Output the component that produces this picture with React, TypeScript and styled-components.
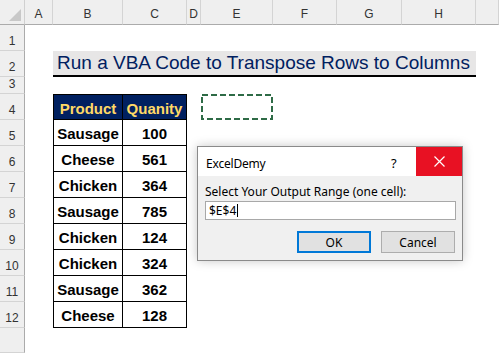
import styled, { createGlobalStyle } from "styled-components";

const GlobalStyle = createGlobalStyle`
  html, body {
    margin: 0;
    padding: 0;
    background: #ffffff;
    overflow: hidden;
  }
  * {
    box-sizing: border-box;
  }
`;

const COLS = "25px 28px 70px 64px 14px 72px 64px 65px 74px 1fr";

const Page = styled.div`
  position: relative;
  width: 499px;
  height: 353px;
  overflow: hidden;
  font-family: "Liberation Sans", Arial, sans-serif;
`;

const Sheet = styled.div`
  display: flex;
  flex-direction: column;
  height: 100%;
`;

const Row = styled.div<{ h: number }>`
  display: grid;
  grid-template-columns: ${COLS};
  height: ${({ h }) => h}px;
  flex: ${({ h }) => (h === 0 ? "1" : "none")};
`;

const Corner = styled.div`
  position: relative;
  background: #efefef;
  border-right: 1px solid #d0d0d0;
  border-bottom: 1px solid #ababab;

  &::after {
    content: "";
    position: absolute;
    right: 3px;
    bottom: 3px;
    border-style: solid;
    border-width: 0 0 12px 12px;
    border-color: transparent transparent #c8c8c8 transparent;
  }
`;

const ColHead = styled.div`
  display: flex;
  align-items: flex-end;
  justify-content: center;
  padding-bottom: 3px;
  background: #efefef;
  border-right: 1px solid #d4d4d4;
  border-bottom: 1px solid #ababab;
  font-size: 12px;
  line-height: 14px;
  color: #333333;
`;

const RowHead = styled.div`
  display: flex;
  align-items: flex-end;
  justify-content: center;
  padding-bottom: 2px;
  background: #efefef;
  border-right: 1px solid #ababab;
  border-bottom: 1px solid #d4d4d4;
  font-size: 12px;
  line-height: 14px;
  color: #333333;
`;

const Blank = styled.div<{ span?: number }>`
  grid-column: span ${({ span }) => span ?? 1};
  background: #ffffff;
`;

const Title = styled.div`
  grid-column: span 7;
  display: flex;
  align-items: center;
  padding-left: 4px;
  background: #e7e6e6;
  border-bottom: 2px solid #000000;
  font-size: 19px;
  color: #002060;
  white-space: nowrap;
`;

const TableCell = styled.div<{ head?: boolean; first?: boolean; top?: boolean }>`
  display: flex;
  align-items: center;
  justify-content: center;
  padding-top: 2px;
  font-size: 15px;
  font-weight: bold;
  white-space: nowrap;
  color: ${({ head }) => (head ? "#ffd966" : "#000000")};
  background: ${({ head }) => (head ? "#002060" : "#ffffff")};
  border-right: 1px solid #000000;
  border-bottom: 1px solid #000000;
  ${({ first }) => first && "border-left: 1px solid #000000;"}
  ${({ top }) => top && "border-top: 1px solid #000000;"}
`;

const MarqueeCell = styled.div`
  display: flex;
`;

const Dialog = styled.div`
  position: absolute;
  left: 197px;
  top: 146px;
  width: 266px;
  height: 115px;
  display: flex;
  flex-direction: column;
  background: #f0f0f0;
  border: 1px solid #8a8a8a;
  box-shadow: 0 0 10px rgba(0, 0, 0, 0.22);
  font-family: "Noto Sans", "Open Sans", sans-serif;
  font-size: 12px;
  color: #000000;
`;

const TitleBar = styled.div`
  display: flex;
  align-items: center;
  height: 29px;
  background: #ffffff;
`;

const DialogTitle = styled.div`
  flex: 1;
  padding: 3px 0 0 8px;
  letter-spacing: -0.2px;
`;

const HelpMark = styled.div`
  width: 25px;
  padding-top: 3px;
  font-size: 13px;
`;

const CloseButton = styled.div`
  width: 46px;
  height: 100%;
  display: flex;
  align-items: center;
  justify-content: center;
  background: #e81123;
`;

const DialogBody = styled.div`
  display: flex;
  flex-direction: column;
  padding: 8px 6px 0 7px;
`;

const Label = styled.div`
  line-height: 16px;
  margin-bottom: 1px;
`;

const InputBox = styled.div`
  display: flex;
  align-items: center;
  height: 19px;
  padding-left: 3px;
  background: #ffffff;
  border: 1px solid #a8a8a8;
  line-height: 16px;
`;

const Caret = styled.span`
  display: inline-block;
  width: 1px;
  height: 13px;
  margin-left: 1px;
  background: #000000;
`;

const ButtonRow = styled.div`
  display: flex;
  justify-content: flex-end;
  gap: 10px;
  margin-top: 11px;
  padding-right: 1px;
`;

const DialogButton = styled.div<{ primary?: boolean }>`
  width: 74px;
  height: 22px;
  display: flex;
  align-items: center;
  justify-content: center;
  background: #e1e1e1;
  border: ${({ primary }) => (primary ? "2px solid #0078d7" : "1px solid #adadad")};
`;

const letters = ["A", "B", "C", "D", "E", "F", "G", "H", ""];

const data: [string, number][] = [
  ["Sausage", 100],
  ["Cheese", 561],
  ["Chicken", 364],
  ["Sausage", 785],
  ["Chicken", 124],
  ["Chicken", 324],
  ["Sausage", 362],
  ["Cheese", 128],
];

export default function App() {
  return (
    <>
      <GlobalStyle />
      <Page>
        <Sheet>
          <Row h={25}>
            <Corner />
            {letters.map((l, i) => (
              <ColHead key={i}>{l}</ColHead>
            ))}
          </Row>
          <Row h={26}>
            <RowHead>1</RowHead>
            <Blank span={9} />
          </Row>
          <Row h={26}>
            <RowHead>2</RowHead>
            <Blank />
            <Title>Run a VBA Code to Transpose Rows to Columns</Title>
            <Blank />
          </Row>
          <Row h={17}>
            <RowHead>3</RowHead>
            <Blank span={9} />
          </Row>
          <Row h={26}>
            <RowHead>4</RowHead>
            <Blank />
            <TableCell head first top>
              Product
            </TableCell>
            <TableCell head top>
              Quanity
            </TableCell>
            <Blank />
            <MarqueeCell>
              <svg width="72" height="26" viewBox="0 0 72 26">
                <rect
                  x="1"
                  y="1"
                  width="70"
                  height="24"
                  fill="none"
                  stroke="#2e6b46"
                  strokeWidth="2"
                  strokeDasharray="6 3"
                />
              </svg>
            </MarqueeCell>
            <Blank span={4} />
          </Row>
          {data.map(([name, qty], i) => (
            <Row h={26} key={i}>
              <RowHead>{i + 5}</RowHead>
              <Blank />
              <TableCell first>{name}</TableCell>
              <TableCell>{qty}</TableCell>
              <Blank span={6} />
            </Row>
          ))}
          <Row h={0}>
            <RowHead />
            <Blank span={9} />
          </Row>
        </Sheet>

        <Dialog>
          <TitleBar>
            <DialogTitle>ExcelDemy</DialogTitle>
            <HelpMark>?</HelpMark>
            <CloseButton>
              <svg width="11" height="11" viewBox="0 0 11 11">
                <path d="M0.5 0.5 L10.5 10.5 M10.5 0.5 L0.5 10.5" stroke="#ffffff" strokeWidth="1.2" />
              </svg>
            </CloseButton>
          </TitleBar>
          <DialogBody>
            <Label>Select Your Output Range (one cell):</Label>
            <InputBox>
              $E$4
              <Caret />
            </InputBox>
            <ButtonRow>
              <DialogButton primary>OK</DialogButton>
              <DialogButton>Cancel</DialogButton>
            </ButtonRow>
          </DialogBody>
        </Dialog>
      </Page>
    </>
  );
}
